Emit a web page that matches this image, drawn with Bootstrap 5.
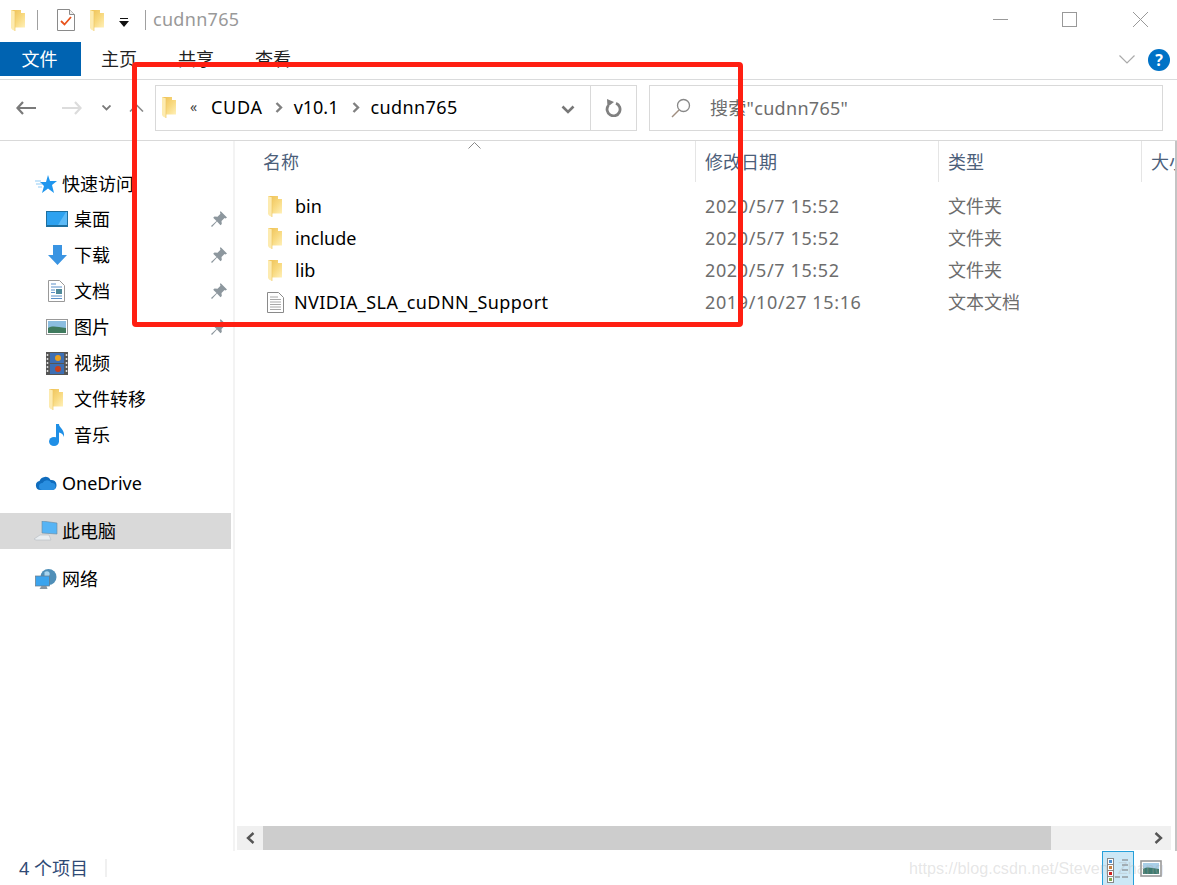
<!DOCTYPE html>
<html lang="zh-CN">
<head>
  <meta charset="UTF-8" />
  <meta name="viewport" content="width=device-width, initial-scale=1" />
  <title>cudnn765</title>
  <link href="https://cdn.jsdelivr.net/npm/bootstrap@5.3.0/dist/css/bootstrap.min.css" rel="stylesheet" />
  <style>
    html, body { margin: 0; background: #fff; }
    body { font-family: "Noto Sans", "Noto Sans CJK SC", sans-serif; font-size: 18px; line-height: 24px; color: #000; }
    .win { width: 1177px; height: 885px; overflow: hidden; }
    svg { display: block; flex: none; }

    .title-bar { height: 40px; color: #999; }
    .title-text { margin-left: 7px; margin-bottom: 2px; letter-spacing: .3px; }
    .vsep { width: 1px; height: 20px; background: #a0a0a0; }
    .win-btn { position: absolute; top: 0; }

    .ribbon { height: 40px; border-bottom: 1px solid #dadbdc; }
    .tab-file { width: 81px; height: 34px; margin-top: 2px; padding-right: 2px; background: #0063b1; color: #fff; }
    .tab-plain { width: 77px; height: 34px; margin-top: 2px; padding-right: 1px; color: #222; }

    .addr-row { height: 61px; border-bottom: 1px solid #d9d9d9; }
    .addr-box { height: 46px; border: 1px solid #d9d9d9; margin-top: 5px; }
    .crumbs { width: 434px; padding: 0 0 2px 6px; }
    .refresh { width: 46px; border-left: 1px solid #d9d9d9; }
    .search-hint { color: #6d6d6d; }
    .search-hint span { margin-left: 19px; letter-spacing: .3px; }

    .main-area { height: 710px; }
    .side-pane { width: 235px; border-right: 2px solid #f3f3f3; padding-top: 25px; }
    .nav-item-row { height: 36px; width: 231px; }
    .lvl1 { padding-left: 35px; }
    .lvl2 { padding-left: 46px; padding-bottom: 2px; }
    .nav-ico { margin-right: 6px; }
    .lvl1 .nav-ico { margin-right: 5px; }
    .pin-slot { position: absolute; left: 211px; top: 9px; }
    .nav-sel { background: #d9d9d9; }
    .gap-a { margin-top: 11px; }
    .gap-b { margin-top: 12px; }

    .file-pane { width: 942px; border-right: 2px solid #c4c4c4; }
    .col-head { height: 41px; color: #4c607a; }
    .hd-cell { height: 41px; border-right: 1px solid #e5e5e5; padding-top: 9px; white-space: nowrap; }
    .w-name { width: 461px; padding-left: 28px; }
    .w-date { width: 243px; padding-left: 9px; }
    .w-type { width: 203px; padding-left: 9px; }
    .w-size { width: 33px; padding-left: 9px; overflow: hidden; border-right: 0; }
    .sort-caret { position: absolute; left: 233px; top: 1px; }
    .file-list { padding-top: 8px; }
    .file-row { height: 32px; }
    .file-name { width: 461px; padding-left: 33px; }
    .nombre-largo { letter-spacing: .42px; }
    .meta { color: #6d6d6d; white-space: nowrap; }
    .meta-date { width: 243px; padding-left: 9px; letter-spacing: .63px; }
    .meta-type { padding-left: 9px; }

    .h-scroll { height: 24px; margin: 0 4px 1px 2px; background: #f0f0f0; }
    .scroll-btn { width: 26px; }
    .scroll-thumb { width: 788px; background: #cdcdcd; }

    .status-bar { height: 34px; color: #2f4a75; }
    .status-text { padding-left: 19px; width: 105px; }
    .status-sep { width: 2px; height: 18px; background: #f0f0f0; }
    .view-on { width: 32px; height: 34px; margin-left: 995px; background: #cce8f6; border: 1px solid #26a0da; border-bottom: 0; }
    .view-off { width: 34px; height: 34px; }
    .wm-text { position: absolute; left: 909px; top: 856px; white-space: nowrap; font-family: "Liberation Sans", sans-serif; font-size: 16.200px; color: rgba(170, 170, 170, .3); }

    .red-frame { position: absolute; left: 132px; top: 62px; width: 611px; height: 265px; border: 5px solid #ff1f12; border-radius: 4px; }
  </style>
</head>
<body>
  <svg width="0" height="0" class="position-absolute">
    <defs>
      <linearGradient id="fg" x1="0" y1="0" x2="1" y2="1">
        <stop offset="0" stop-color="#eebf52" />
        <stop offset=".55" stop-color="#f8d97f" />
        <stop offset="1" stop-color="#fff0b8" />
      </linearGradient>
      <symbol id="folder" viewBox="0 0 14 21">
        <path d="M0 0h10v3h4v14.500H3z" fill="url(#fg)" />
        <path d="M0 0l4 1.500V21l-3-1.500L0 18z" fill="#fdebb0" />
        <path d="M4 1.500V21" stroke="#eec868" stroke-width=".7" />
      </symbol>
      <symbol id="pin" viewBox="0 0 16 16">
        <path d="M9.500 0 16 6.500l-1.500 1-1-.5-3 3 .3 3-1.300 1.300L6 10.500 1 16l-1-1 5.500-5L2.200 6.800l1.300-1.300 3 .3 3-3-.5-1z" fill="#8d979e" />
      </symbol>
    </defs>
  </svg>

  <div class="win d-flex flex-column position-relative">
    <!-- title bar -->
    <div class="title-bar d-flex align-items-center position-relative">
      <svg width="14" height="21" style="margin-left:11px"><use href="#folder" /></svg>
      <div class="vsep" style="margin-left:12px"></div>
      <svg width="18" height="22" viewBox="0 0 18 22" style="margin-left:19px">
        <path d="M.5.500h12l5 5v16H.5z" fill="#fff" stroke="#8a8a8a" />
        <path d="M12.500.500v5h5" fill="#eee" stroke="#8a8a8a" />
        <path d="M4 12l3.500 3.500L14 8" fill="none" stroke="#e8531c" stroke-width="1.800" />
      </svg>
      <svg width="14" height="21" style="margin-left:15px"><use href="#folder" /></svg>
      <svg width="10" height="9" viewBox="0 0 10 9" style="margin-left:15px;margin-top:4px">
        <path d="M1 0h8v1H1zM0 3h10L5 9z" fill="#111" />
      </svg>
      <div class="vsep" style="margin-left:16px"></div>
      <span class="title-text">cudnn765</span>
      <svg class="win-btn" style="left:993px;top:19px" width="15" height="1"><rect width="15" height="1" fill="#999" /></svg>
      <svg class="win-btn" style="left:1062px;top:12px" width="15" height="15"><rect x=".5" y=".5" width="14" height="14" fill="none" stroke="#999" /></svg>
      <svg class="win-btn" style="left:1133px;top:12px" width="15" height="15"><path d="M0 0l15 15M15 0L0 15" stroke="#999" /></svg>
    </div>

    <!-- ribbon tabs -->
    <div class="ribbon d-flex position-relative">
      <div class="tab-file d-flex align-items-center justify-content-center">文件</div>
      <div class="tab-plain d-flex align-items-center justify-content-center">主页</div>
      <div class="tab-plain d-flex align-items-center justify-content-center">共享</div>
      <div class="tab-plain d-flex align-items-center justify-content-center">查看</div>
      <div class="ms-auto d-flex align-items-center" style="margin-right:7px">
        <svg width="16" height="9" viewBox="0 0 16 9"><path d="M.5.500 8 8 15.500.500" fill="none" stroke="#aaa" stroke-width="1.200" /></svg>
        <div class="rounded-circle d-flex align-items-center justify-content-center fw-bold text-white" style="width:22px;height:22px;margin-left:13px;background:#0072c6;font-size:16px">?</div>
      </div>
    </div>

    <!-- address row -->
    <div class="addr-row d-flex">
      <div class="d-flex align-items-center" style="width:155px;height:56px">
        <svg style="margin-left:16px" width="20" height="14" viewBox="0 0 20 14"><path d="M7 1 1.500 7 7 13M2 7h18" fill="none" stroke="#7a7a7a" stroke-width="2.200" /></svg>
        <svg style="margin-left:26px" width="20" height="14" viewBox="0 0 20 14"><path d="M13 1l5.500 6L13 13M18 7H0" fill="none" stroke="#dcdcdc" stroke-width="2.200" /></svg>
        <svg style="margin-left:20px" width="9" height="6" viewBox="0 0 9 6"><path d="M.5.500l4 4 4-4" fill="none" stroke="#7a7a7a" stroke-width="1.800" /></svg>
        <svg style="margin-left:18px" width="15" height="8" viewBox="0 0 15 8"><path d="M1 7.500l6.500-6.500L14 7.500" fill="none" stroke="#8a8a8a" stroke-width="1.600" /></svg>
      </div>
      <div class="addr-box d-flex">
        <div class="crumbs d-flex align-items-center">
          <svg width="14" height="21"><use href="#folder" /></svg>
          <span style="margin-left:14px;width:21px;font-size:14px;color:#444">«</span>
          <span style="letter-spacing:.7px">CUDA</span>
          <svg style="margin-left:12px" width="8" height="11" viewBox="0 0 8 11"><path d="M1.500 1l4.500 4.500L1.500 10" fill="none" stroke="#808080" stroke-width="2.400" /></svg>
          <span style="margin-left:11px">v10.1</span>
          <svg style="margin-left:14px" width="8" height="11" viewBox="0 0 8 11"><path d="M1.500 1l4.500 4.500L1.500 10" fill="none" stroke="#808080" stroke-width="2.400" /></svg>
          <span style="margin-left:10px;letter-spacing:.4px">cudnn765</span>
          <svg class="ms-auto" style="margin-right:15px;margin-top:5px" width="14" height="9" viewBox="0 0 14 9"><path d="M1.500 1.500 7 7l5.500-5.500" fill="none" stroke="#777" stroke-width="2.600" /></svg>
        </div>
        <div class="refresh d-flex align-items-center justify-content-center">
          <svg width="17" height="18" viewBox="0 0 17 18"><path d="M11 4.300A6.500 6.500 0 1 1 3.300 6.500" fill="none" stroke="#808080" stroke-width="2.800" /><path d="M2 0l.5 8L9 3z" fill="#808080" /></svg>
        </div>
      </div>
      <div class="addr-box d-flex align-items-center search-hint" style="margin-left:12px;width:514px">
        <svg style="margin-left:21px" width="20" height="20" viewBox="0 0 20 20"><circle cx="12.500" cy="7.500" r="6" fill="none" stroke="#888" stroke-width="1.300" /><path d="M8 12 1 19" stroke="#a08e80" stroke-width="1.500" /></svg>
        <span>搜索"cudnn765"</span>
      </div>
    </div>

    <!-- main -->
    <div class="main-area d-flex">
      <div class="side-pane">
        <ul class="list-unstyled mb-0">
          <li class="nav-item-row lvl1 d-flex align-items-center">
            <svg class="nav-ico" width="22" height="18" viewBox="0 0 22 18"><path d="M13 0l2 6h7l-5 4 2 8-6-4.500L7 18l2-7-4-4h6z" fill="#1f96ee" /><path d="M0 6h6M1 9h6M3 12h4" stroke="#8fcbf5" /></svg>
            <span>快速访问</span>
          </li>
          <li class="nav-item-row lvl2 d-flex align-items-center position-relative">
            <svg class="nav-ico" width="22" height="16" viewBox="0 0 22 16"><rect width="22" height="16" fill="#1e6f9f" /><rect x="1" y="1" width="20" height="13" fill="#2ea2f0" /><path d="M12 14l8-13h1v13z" fill="#5cbaf7" /></svg>
            <span>桌面</span>
            <svg class="pin-slot" width="16" height="16"><use href="#pin" /></svg>
          </li>
          <li class="nav-item-row lvl2 d-flex align-items-center position-relative">
            <svg class="nav-ico" width="19" height="20" viewBox="0 0 19 20" style="margin-left:2px;margin-right:7px"><path d="M5 0h9v10h5l-9.500 10L0 10h5z" fill="#3a94e2" /></svg>
            <span>下载</span>
            <svg class="pin-slot" width="16" height="16"><use href="#pin" /></svg>
          </li>
          <li class="nav-item-row lvl2 d-flex align-items-center position-relative">
            <svg class="nav-ico" width="17" height="22" viewBox="0 0 17 22" style="margin-left:2px;margin-right:9px"><path d="M.5.500h11l5 5v16H.5z" fill="#fff" stroke="#999" /><path d="M3 4h5M3 7h11M3 16h11M3 18.500h11" stroke="#5b8fc9" /><rect x="8" y="9" width="6" height="5" fill="#4f8a9a" /><path d="M3 10h4M3 12.500h4" stroke="#5b8fc9" /></svg>
            <span>文档</span>
            <svg class="pin-slot" width="16" height="16"><use href="#pin" /></svg>
          </li>
          <li class="nav-item-row lvl2 d-flex align-items-center position-relative">
            <svg class="nav-ico" width="22" height="16" viewBox="0 0 22 16"><rect x=".5" y=".5" width="21" height="15" fill="#fff" stroke="#999" /><rect x="2" y="2" width="18" height="12" fill="#8bbde0" /><path d="M2 9c5-3 9-1 18 0v5H2z" fill="#3f7a5e" /></svg>
            <span>图片</span>
            <svg class="pin-slot" width="16" height="16"><use href="#pin" /></svg>
          </li>
          <li class="nav-item-row lvl2 d-flex align-items-center">
            <svg class="nav-ico" width="22" height="23" viewBox="0 0 22 23"><rect width="22" height="23" fill="#555" /><rect x="4" y="1" width="14" height="10" fill="#3d6fb4" /><rect x="4" y="12" width="14" height="10" fill="#3d6fb4" /><circle cx="12" cy="6" r="3" fill="#e8a020" /><circle cx="12" cy="17" r="3" fill="#c8401c" /><path d="M1.500 2v19M20.500 2v19" stroke="#ddd" stroke-width="1.500" stroke-dasharray="2 2" /></svg>
            <span>视频</span>
          </li>
          <li class="nav-item-row lvl2 d-flex align-items-center">
            <svg class="nav-ico" width="14" height="21" style="margin-left:3px;margin-right:11px"><use href="#folder" /></svg>
            <span>文件转移</span>
          </li>
          <li class="nav-item-row lvl2 d-flex align-items-center">
            <svg class="nav-ico" width="16" height="22" viewBox="0 0 16 22" style="margin-left:3px;margin-right:9px"><ellipse cx="5" cy="17.500" rx="5" ry="4.500" fill="#1f8fe6" /><path d="M7 0h3c0 4 6 5 5 13-1-3-3-4-5-4.500V18H7z" fill="#1f8fe6" /></svg>
            <span>音乐</span>
          </li>
          <li class="nav-item-row lvl1 d-flex align-items-center gap-a">
            <svg class="nav-ico" width="22" height="14" viewBox="0 0 21 14"><path d="M5 14a4.500 4.500 0 0 1-1-8.900A6 6 0 0 1 15 4a5 5 0 0 1 6 5 5 5 0 0 1-4 5z" fill="#0f6cbd" /><path d="M7 14a3.500 3.500 0 0 1 0-7 5 5 0 0 1 9 0 3.500 3.500 0 0 1 1 7z" fill="#2a8fe0" /></svg>
            <span>OneDrive</span>
          </li>
          <li class="nav-item-row lvl1 nav-sel d-flex align-items-center gap-b">
            <svg class="nav-ico" width="24" height="20" viewBox="0 0 24 20" style="margin-left:-1px;margin-right:4px"><path d="M8 0l15 2v11L8 12z" fill="#56b4f5" stroke="#6c8aa0" stroke-width=".6" /><path d="M0 18l6-4h9l2 5H2z" fill="#e9edf0" stroke="#b5bcc2" stroke-width=".6" /></svg>
            <span>此电脑</span>
          </li>
          <li class="nav-item-row lvl1 d-flex align-items-center gap-b">
            <svg class="nav-ico" width="22" height="21" viewBox="0 0 21 21"><circle cx="13" cy="8" r="8" fill="#4f8fb8" /><path d="M9 3c3-2 6 0 5 3s-4 3-5 1z" fill="#a8d4ee" /><rect x="0" y="7" width="14" height="10" fill="#3ba4ee" stroke="#6a7a86" stroke-width=".7" /><path d="M4 20h8l-1-3H6z" fill="#8a96a0" /></svg>
            <span>网络</span>
          </li>
        </ul>
      </div>

      <div class="file-pane d-flex flex-column">
        <div class="col-head d-flex position-relative">
          <div class="hd-cell w-name">名称</div>
          <div class="hd-cell w-date">修改日期</div>
          <div class="hd-cell w-type">类型</div>
          <div class="hd-cell w-size">大小</div>
          <svg class="sort-caret" width="13" height="7" viewBox="0 0 13 7"><path d="M.5 6.500l6-6 6 6" fill="none" stroke="#888" /></svg>
        </div>
        <div class="file-list flex-grow-1" id="file-list"></div>
        <div class="h-scroll d-flex">
          <div class="scroll-btn d-flex align-items-center justify-content-center">
            <svg width="9" height="12" viewBox="0 0 9 12"><path d="M7.500 1 2 6l5.500 5" fill="none" stroke="#555" stroke-width="2.400" /></svg>
          </div>
          <div class="scroll-thumb"></div>
          <div class="flex-grow-1"></div>
          <div class="scroll-btn d-flex align-items-center justify-content-center">
            <svg width="9" height="12" viewBox="0 0 9 12"><path d="M1.500 1 7 6l-5.500 5" fill="none" stroke="#555" stroke-width="2.400" /></svg>
          </div>
        </div>
      </div>
    </div>

    <!-- status bar -->
    <div class="status-bar d-flex align-items-center">
      <div class="status-text">4 个项目</div>
      <div class="status-sep"></div>
      <div class="view-on d-flex align-items-center justify-content-center">
        <svg width="22" height="28" viewBox="0 0 22 28"><rect x=".5" y="3.500" width="6" height="6" fill="#fff" stroke="#888" /><rect x=".5" y="9.500" width="6" height="6" fill="#fff" stroke="#888" /><rect x=".5" y="15.500" width="6" height="6" fill="#fff" stroke="#888" /><rect x=".5" y="21.500" width="6" height="6" fill="#fff" stroke="#888" /><rect x="2" y="5" width="3" height="3" fill="#4a8fd0" /><rect x="2" y="11" width="3" height="3" fill="#c98040" /><rect x="2" y="17" width="3" height="3" fill="#d02020" /><rect x="2" y="23" width="3" height="3" fill="#80a850" /><path d="M15 5h6M15 10h6M15 15h6M8 22h5M15 22h6" stroke="#777" /></svg>
      </div>
      <div class="view-off d-flex align-items-center justify-content-center">
        <svg width="22" height="17" viewBox="0 0 22 17"><rect x="1" y="1" width="20" height="15" fill="#fff" stroke="#999" stroke-width="1.600" /><rect x="3" y="3" width="16" height="11" fill="#a8cfe8" /><path d="M3 9c5-3 8-1 16 0v5H3z" fill="#3f7a6e" /></svg>
      </div>
    </div>

    <div class="wm-text">https://blog.csdn.net/Steven_Zhang</div>
    <div class="red-frame"></div>
  </div>

  <script src="https://cdn.jsdelivr.net/npm/bootstrap@5.3.0/dist/js/bootstrap.bundle.min.js"></script>
  <script>
    const archivos = [
      { nombre: "bin", fecha: "2020/5/7 15:52", tipo: "文件夹", carpeta: true },
      { nombre: "include", fecha: "2020/5/7 15:52", tipo: "文件夹", carpeta: true },
      { nombre: "lib", fecha: "2020/5/7 15:52", tipo: "文件夹", carpeta: true },
      { nombre: "NVIDIA_SLA_cuDNN_Support", fecha: "2019/10/27 15:16", tipo: "文本文档", carpeta: false }
    ];
    const iconoCarpeta = `<svg width="14" height="21" style="margin-right:13px"><use href="#folder"/></svg>`;
    const iconoTexto = `<svg width="17" height="21" viewBox="0 0 17 21" style="margin-left:-1px;margin-right:10px"><path d="M.5.500h11l5 5v15H.5z" fill="#fff" stroke="#8a8a8a"/><path d="M3 5h8M3 7.500h11M3 10h11M3 12.500h11M3 15h11M3 17.500h11" stroke="#a8a8a8"/></svg>`;
    document.getElementById("file-list").innerHTML = archivos.map(a => `
      <div class="file-row d-flex align-items-center">
        <div class="file-name d-flex align-items-center">
          ${a.carpeta ? iconoCarpeta : iconoTexto}
          <span class="${a.carpeta ? "" : "nombre-largo"}">${a.nombre}</span>
        </div>
        <div class="meta meta-date">${a.fecha}</div>
        <div class="meta meta-type">${a.tipo}</div>
      </div>`).join("");
  </script>
</body>
</html>
